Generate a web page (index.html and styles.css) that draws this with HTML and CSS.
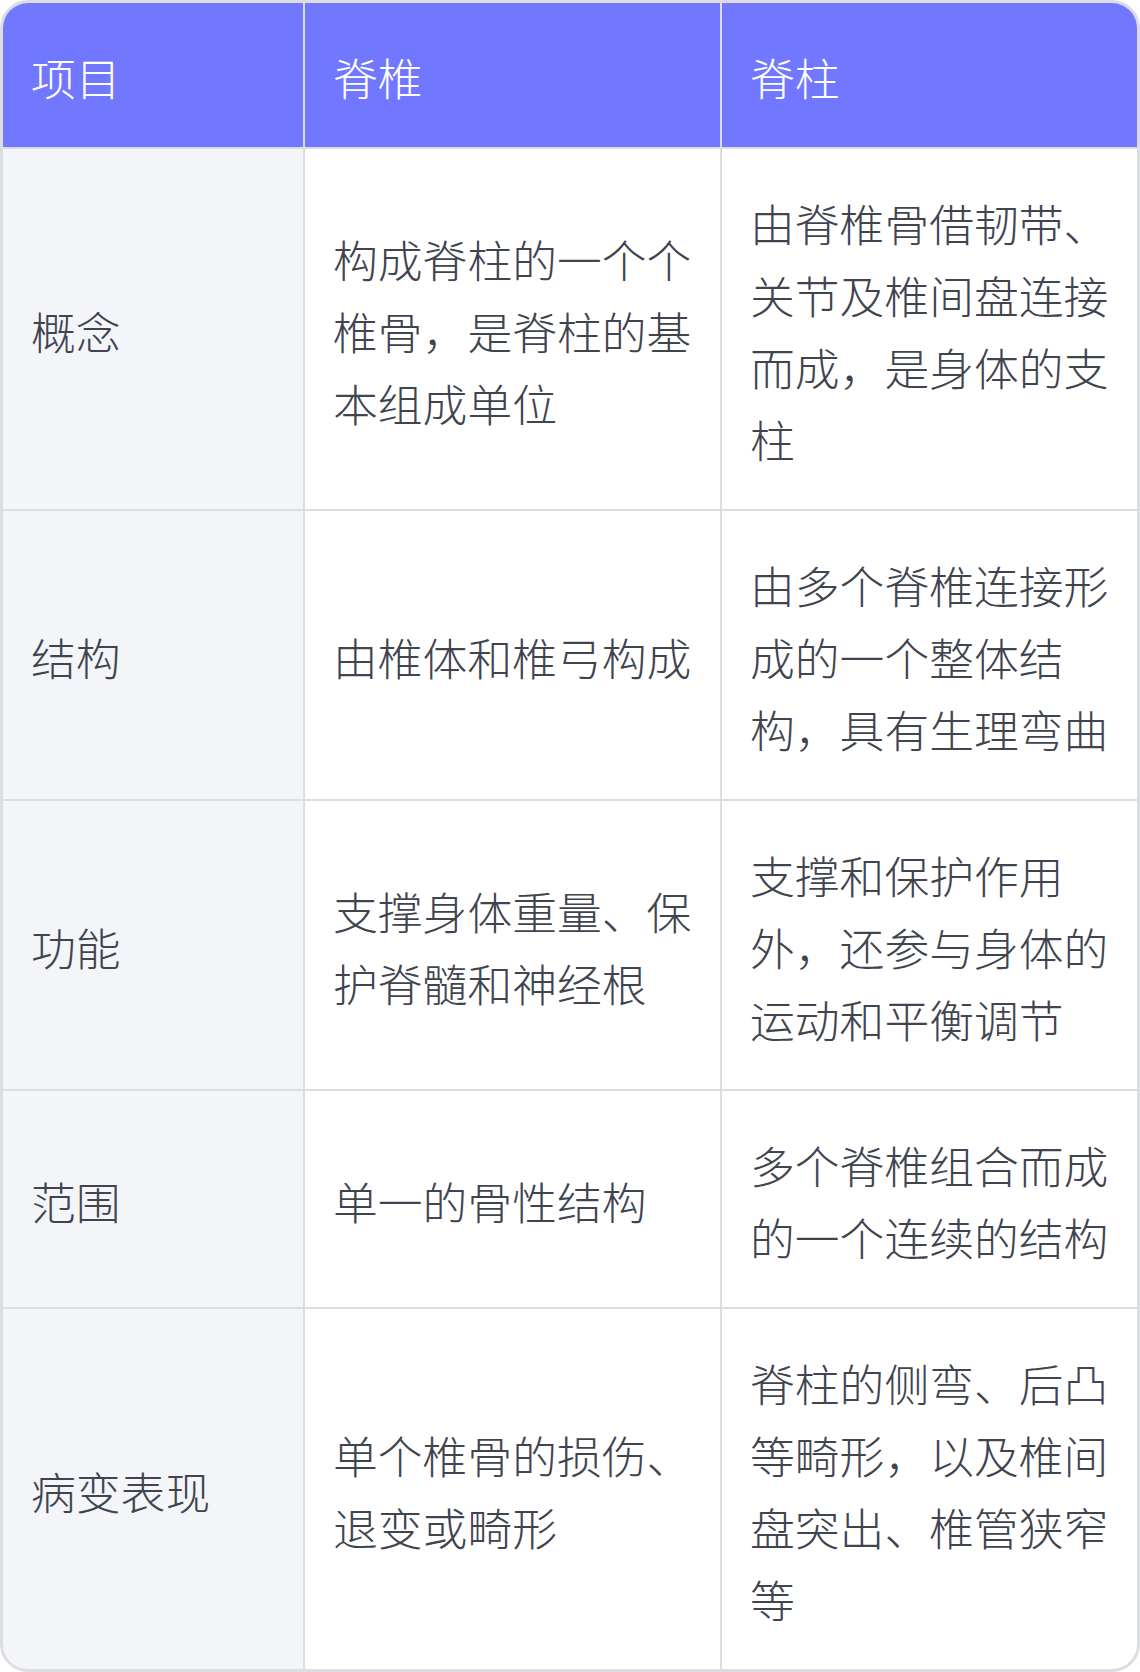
FILE: index.html
```html
<!DOCTYPE html>
<html lang="zh-CN">
<head>
<meta charset="utf-8">
<title>脊椎与脊柱</title>
<link rel="stylesheet" href="styles.css">
</head>
<body>
<div class="table-wrap">
  <div class="grid">
    <div class="cell head">项目</div>
    <div class="cell head">脊椎</div>
    <div class="cell head">脊柱</div>

    <div class="cell label">概念</div>
    <div class="cell">构成脊柱的一个个椎骨，是脊柱的基本组成单位</div>
    <div class="cell">由脊椎骨借韧带、关节及椎间盘连接而成，是身体的支柱</div>

    <div class="cell label">结构</div>
    <div class="cell">由椎体和椎弓构成</div>
    <div class="cell">由多个脊椎连接形成的一个整体结构，具有生理弯曲</div>

    <div class="cell label">功能</div>
    <div class="cell">支撑身体重量、保护脊髓和神经根</div>
    <div class="cell">支撑和保护作用外，还参与身体的运动和平衡调节</div>

    <div class="cell label">范围</div>
    <div class="cell">单一的骨性结构</div>
    <div class="cell">多个脊椎组合而成的一个连续的结构</div>

    <div class="cell label">病变表现</div>
    <div class="cell">单个椎骨的损伤、退变或畸形</div>
    <div class="cell">脊柱的侧弯、后凸等畸形，以及椎间盘突出、椎管狭窄等</div>
  </div>
</div>
</body>
</html>
```

FILE: styles.css
```css
html, body {
  margin: 0;
  padding: 0;
  background: #ffffff;
}

body {
  font-family: "Noto Sans CJK SC", "Noto Sans", sans-serif;
  color: #40444f;
}

.table-wrap {
  width: 1140px;
  box-sizing: border-box;
  border: 3px solid #dcdde3;
  border-radius: 28px;
  overflow: hidden;
}

.grid {
  display: grid;
  grid-template-columns: 300px 415px 415px;
  gap: 2px;
  background: #dcdde3;
}

.cell {
  display: flex;
  align-items: center;
  box-sizing: border-box;
  padding: 38px 27px 34px 28px;
  font-size: 44.8px;
  font-weight: 300;
  line-height: 72px;
  background: #ffffff;
  word-break: break-all;
}

.head {
  background: #7177ff;
  color: #ffffff;
}

.label {
  background: #f4f5f9;
}
```
